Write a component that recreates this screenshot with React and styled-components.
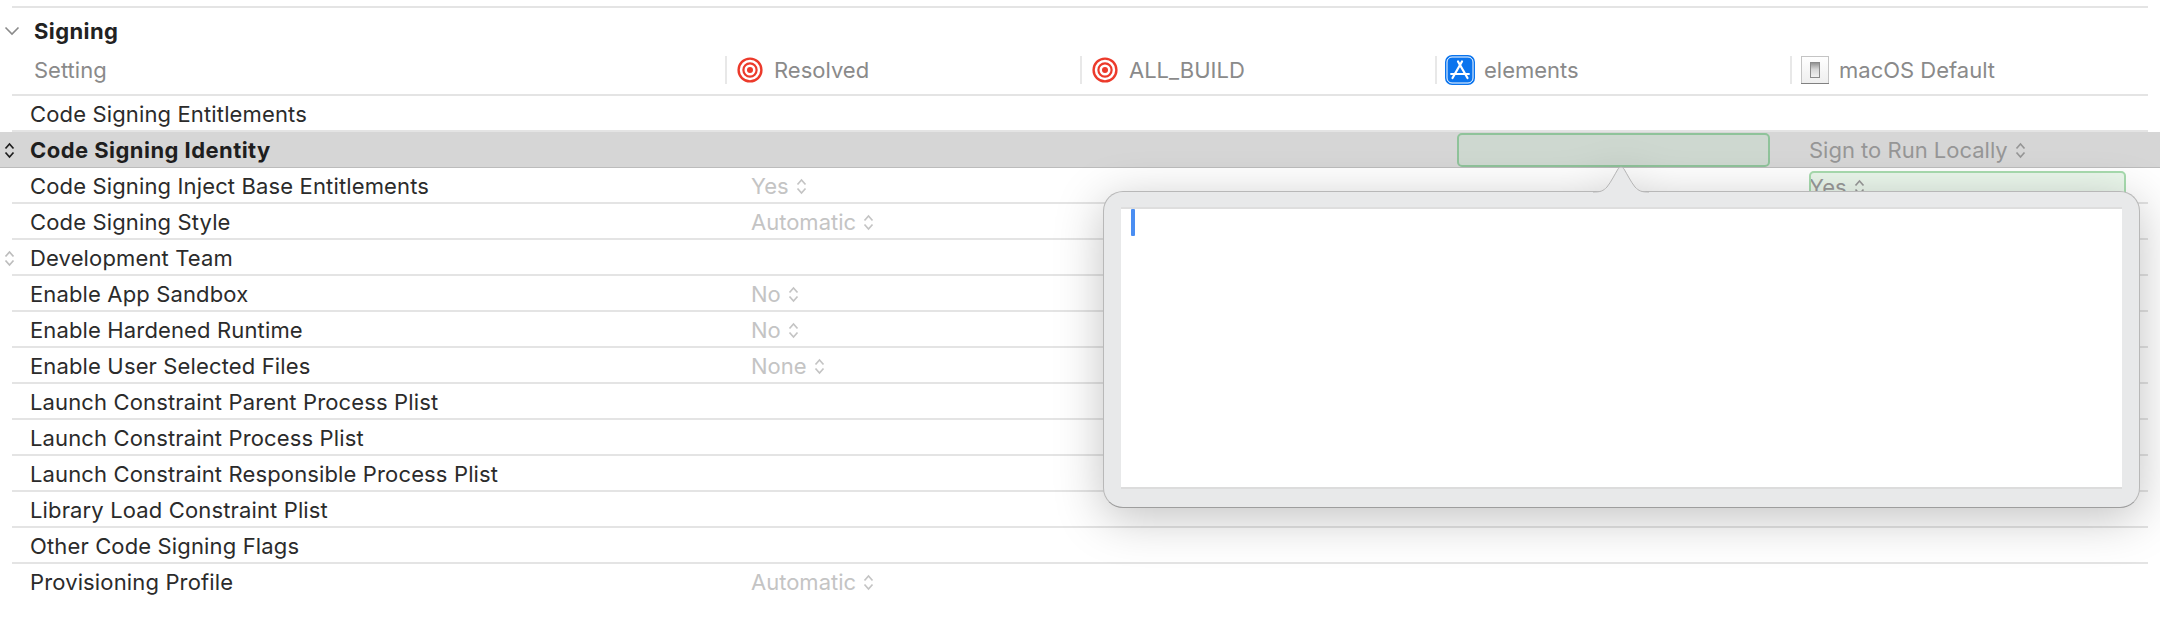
import React from "react";
import styled, { createGlobalStyle } from "styled-components";

const rows = [
  { label: "Code Signing Entitlements" },
  { label: "Code Signing Identity", selected: true, marker: true, platform: "Sign to Run Locally", field: true },
  { label: "Code Signing Inject Base Entitlements", value: "Yes", platform: "Yes", platformField: true },
  { label: "Code Signing Style", value: "Automatic" },
  { label: "Development Team", marker: true },
  { label: "Enable App Sandbox", value: "No" },
  { label: "Enable Hardened Runtime", value: "No" },
  { label: "Enable User Selected Files", value: "None" },
  { label: "Launch Constraint Parent Process Plist" },
  { label: "Launch Constraint Process Plist" },
  { label: "Launch Constraint Responsible Process Plist" },
  { label: "Library Load Constraint Plist" },
  { label: "Other Code Signing Flags" },
  { label: "Provisioning Profile", value: "Automatic", last: true },
];

const Stepper = () => (
  <StepperIcon width="11" height="17" viewBox="0 0 11 17" fill="none" stroke="currentColor" strokeWidth="1.7">
    <path d="M1.5 6.5 L5.5 2 L9.5 6.5" />
    <path d="M1.5 10.5 L5.5 15 L9.5 10.5" />
  </StepperIcon>
);

const TargetIcon = () => (
  <svg width="26" height="26" viewBox="0 0 26 26" fill="none" stroke="#ec3a2b">
    <circle cx="13" cy="13" r="11.4" strokeWidth="2.4" />
    <circle cx="13" cy="13" r="6.6" strokeWidth="2.2" />
    <circle cx="13" cy="13" r="3" fill="#ec3a2b" stroke="none" />
  </svg>
);

const AppIcon = () => (
  <svg width="30" height="30" viewBox="0 0 30 30" fill="none">
    <rect x="0" y="0" width="30" height="30" rx="7" fill="#0a74ee" />
    <rect x="2" y="2" width="26" height="26" rx="5" stroke="#fff" strokeWidth="1" />
    <g stroke="#fff" strokeLinecap="round">
      <path d="M13 6.5 L22.5 23" strokeWidth="2.2" />
      <path d="M17 6.5 L7.5 23" strokeWidth="2.2" />
      <path d="M6 19 H24" strokeWidth="1.8" />
    </g>
  </svg>
);

const SwitchIcon = () => (
  <svg width="28" height="28" viewBox="0 0 28 28">
    <defs>
      <linearGradient id="plate" x1="0" y1="0" x2="0" y2="1">
        <stop offset="0" stopColor="#ffffff" />
        <stop offset="1" stopColor="#eeeeee" />
      </linearGradient>
      <linearGradient id="knob" x1="0" y1="0" x2="0" y2="1">
        <stop offset="0" stopColor="#8d8d8d" />
        <stop offset="0.45" stopColor="#d6d6d6" />
        <stop offset="1" stopColor="#f2f2f2" />
      </linearGradient>
    </defs>
    <rect x="0.5" y="0.5" width="27" height="27" fill="url(#plate)" stroke="#c4c4c4" />
    <path d="M0 27.5 H28" stroke="#808080" />
    <rect x="9.5" y="6.5" width="9" height="15" fill="url(#knob)" stroke="#8a8a8a" />
  </svg>
);

function App() {
  return (
    <Page>
      <GlobalStyle />
      <TopLine />
      <SectionHead>
        <svg width="16" height="10" viewBox="0 0 16 10" fill="none" stroke="#8a8a8a" strokeWidth="1.6">
          <path d="M1.5 1.5 L8 8 L14.5 1.5" />
        </svg>
        <SectionTitle>Signing</SectionTitle>
      </SectionHead>
      <HeaderRow>
        <SettingCell>Setting</SettingCell>
        <HeaderCell $inset={10} $gap={11}><TargetIcon />Resolved</HeaderCell>
        <HeaderCell $inset={10} $gap={11}><TargetIcon />ALL_BUILD</HeaderCell>
        <HeaderCell $inset={8} $gap={9}><AppIcon />elements</HeaderCell>
        <HeaderCell $inset={9} $gap={10}><SwitchIcon />macOS Default</HeaderCell>
      </HeaderRow>
      {rows.map((row) => (
        <Row key={row.label} $selected={row.selected} $last={row.last || row.selected}>
          <Gutter $selected={row.selected}>{row.marker && <Stepper />}</Gutter>
          <Label $selected={row.selected}>{row.label}</Label>
          <Value>
            {row.value && <>{row.value}<Stepper /></>}
          </Value>
          <Value />
          <FieldCell>{row.field && <IdentityField />}</FieldCell>
          <PlatformCell>
            {row.platformField ? (
              <PlatformField>{row.platform}<Stepper /></PlatformField>
            ) : row.platform ? (
              <PlatformText>{row.platform}<Stepper /></PlatformText>
            ) : null}
          </PlatformCell>
        </Row>
      ))}
      <Popover>
        <Arrow width="56" height="27" viewBox="0 0 56 27">
          <path
            d="M0 26 C8 26 10 25 14 21 C18 16 22 8 25 3 C26.5 0.6 29.5 0.6 31 3 C34 8 38 16 42 21 C46 25 48 26 56 26 L56 27 L0 27 Z"
            fill="#e8e9ea"
          />
          <path
            d="M0 26 C8 26 10 25 14 21 C18 16 22 8 25 3 C26.5 0.6 29.5 0.6 31 3 C34 8 38 16 42 21 C46 25 48 26 56 26"
            fill="none"
            stroke="#b4b4b4"
          />
        </Arrow>
        <EditArea>
          <Caret />
        </EditArea>
      </Popover>
    </Page>
  );
}

const GlobalStyle = createGlobalStyle`
  html, body {
    margin: 0;
    background: #fff;
  }
  body {
    font-family: Inter, "Liberation Sans", sans-serif;
    font-size: 22px;
    color: #2b2b2b;
  }
`;

const Page = styled.div`
  position: relative;
  width: 2160px;
  height: 630px;
  padding-top: 6px;
  box-sizing: border-box;
  overflow: hidden;
`;

const TopLine = styled.div`
  height: 2px;
  margin: 0 12px;
  background: #e4e4e4;
`;

const SectionHead = styled.div`
  display: flex;
  align-items: center;
  gap: 14px;
  height: 46px;
  padding-left: 4px;
`;

const SectionTitle = styled.div`
  font-weight: 700;
  letter-spacing: 0.4px;
  color: #222;
`;

const HeaderRow = styled.div`
  display: grid;
  grid-template-columns: 713px repeat(3, 355px) 358px;
  margin: 0 12px;
  padding-bottom: 8px;
  height: 32px;
  border-bottom: 2px solid #e4e4e4;
  color: #8a8a8a;
  align-items: center;
`;

const SettingCell = styled.div`
  padding-left: 22px;
`;

const HeaderCell = styled.div`
  display: flex;
  align-items: center;
  gap: ${(p) => p.$gap}px;
  height: 28px;
  padding-left: ${(p) => p.$inset}px;
  border-left: 2px solid #e8e8e8;
  box-sizing: border-box;
`;

const Row = styled.div`
  position: relative;
  display: grid;
  grid-template-columns: 12px 713px repeat(3, 355px) 358px 12px;
  height: 36px;
  align-items: center;
  background: ${(p) => (p.$selected ? "#d6d6d6" : "transparent")};
  box-shadow: ${(p) => (p.$selected ? "inset 0 -1px 0 #bcbcbc" : "none")};

  &::after {
    content: ${(p) => (p.$last ? "none" : '""')};
    position: absolute;
    left: 12px;
    right: 12px;
    bottom: 0;
    height: 2px;
    background: #e4e4e4;
  }
`;

const Gutter = styled.div`
  display: flex;
  justify-content: center;
  padding-left: 6px;
  color: ${(p) => (p.$selected ? "#1e1e1e" : "#bdbdbd")};
`;

const Label = styled.div`
  padding-left: 18px;
  font-weight: ${(p) => (p.$selected ? 700 : 400)};
  letter-spacing: ${(p) => (p.$selected ? "0.45px" : "0.14px")};
  color: ${(p) => (p.$selected ? "#1e1e1e" : "#2b2b2b")};
`;

const Value = styled.div`
  display: flex;
  align-items: center;
  gap: 7px;
  padding-left: 26px;
  color: #c4c4c4;
`;

const FieldCell = styled.div`
  padding-left: 22px;
`;

const IdentityField = styled.div`
  width: 313px;
  height: 34px;
  margin-top: -1px;
  box-sizing: border-box;
  border: 2px solid #8fc39a;
  border-radius: 5px;
  background: #ced8d0;
`;

const PlatformCell = styled.div`
  padding-left: 19px;
`;

const PlatformText = styled.div`
  display: flex;
  align-items: center;
  gap: 7px;
  color: #969696;
`;

const PlatformField = styled.div`
  display: flex;
  align-items: center;
  gap: 7px;
  width: 317px;
  height: 33px;
  margin-top: 2px;
  outline: 2px solid #a8dcaf;
  outline-offset: -2px;
  border-radius: 5px;
  background: #ebf7ec;
  color: #9a9a9a;
`;

const StepperIcon = styled.svg`
  flex: none;
`;

const Popover = styled.div`
  position: absolute;
  left: 1103px;
  top: 191px;
  width: 1037px;
  height: 317px;
  box-sizing: border-box;
  display: flex;
  padding: 15px 17px 18px;
  border: 1px solid #b8b8b8;
  border-bottom-color: #9e9e9e;
  border-radius: 20px;
  background: #e8e9ea;
  filter: drop-shadow(0 10px 24px rgba(0, 0, 0, 0.24));
`;

const Arrow = styled.svg`
  position: absolute;
  left: 489px;
  top: -26px;
`;

const EditArea = styled.div`
  flex: 1;
  background: #fff;
  border-top: 2px solid #dedede;
  border-bottom: 2px solid #dcdcdc;
  padding: 0 0 0 10px;
`;

const Caret = styled.div`
  width: 4px;
  height: 27px;
  margin-top: 0;
  border-radius: 1px;
  background: #4a8ef2;
`;

export default App;
